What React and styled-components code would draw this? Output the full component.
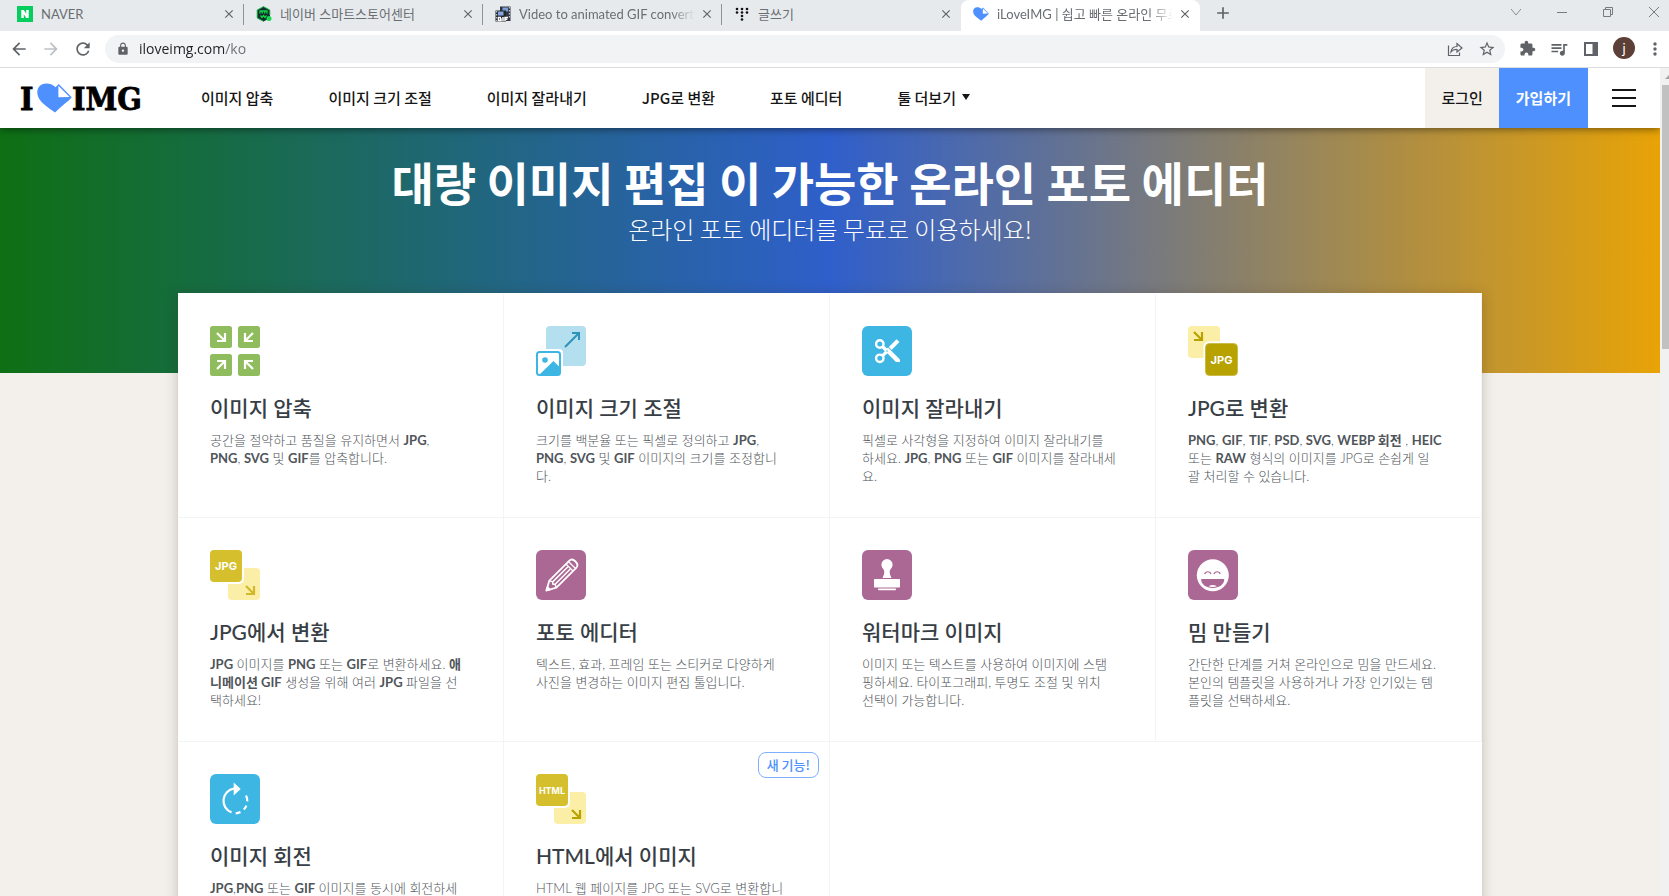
import React from "react";
import styled, { createGlobalStyle, css } from "styled-components";
import {
  MdArrowBack,
  MdArrowForward,
  MdRefresh,
  MdLock,
  MdExtension,
  MdQueueMusic,
  MdStarBorder,
  MdMoreVert,
  MdClose,
  MdAdd,
} from "react-icons/md";

const KR = `"Noto Sans CJK KR", sans-serif`;
const BODY = `Lato, "Noto Sans CJK KR", sans-serif`;

const GlobalStyle = createGlobalStyle`
  *, *::before, *::after { box-sizing: border-box; }
  body { margin: 0; font-family: ${KR}; background: #f3f0ec; }
  button, input { font: inherit; color: inherit; border: 0; padding: 0; background: none; }
  a { color: inherit; text-decoration: none; }
  h1, h2, h3, p, ul { margin: 0; padding: 0; }
  svg { display: block; }
`;

const Window = styled.div`
  height: 100vh;
  display: flex;
  flex-direction: column;
  overflow: hidden;
`;

/* ---------- browser chrome ---------- */

const TabStrip = styled.div`
  flex: none;
  display: flex;
  height: 31px;
  padding-left: 5px;
  background: #e7eaed;
`;

const Tab = styled.div`
  width: 239px;
  flex: 0 1 239px;
  min-width: 0;
  height: 31px;
  display: flex;
  align-items: center;
  gap: 4px;
  padding: 0 7px 4px 12px;
  color: #6a6e73;
  font-family: ${BODY};
  font-size: 13px;
  ${(p) =>
    p.$active
      ? css`
          background: #fff;
          border-radius: 8px 8px 0 0;
        `
      : p.$divided &&
        css`
          background: linear-gradient(#8f9398, #8f9398) right 0 top 4px / 1px 21px no-repeat;
        `}
`;

const TabLabel = styled.button`
  flex: 1;
  min-width: 0;
  display: flex;
  align-items: center;
  gap: 8px;
  line-height: 20px;
  text-align: left;
  svg { flex: none; }
`;

const TabTitle = styled.span`
  flex: 1;
  overflow: hidden;
  white-space: nowrap;
  ${(p) =>
    p.$fade &&
    css`
      mask-image: linear-gradient(90deg, #000 calc(100% - 24px), transparent);
    `}
`;

const IconButton = styled.button`
  flex: none;
  width: ${(p) => p.$size || 24}px;
  height: ${(p) => p.$size || 24}px;
  display: grid;
  place-items: center;
  color: ${(p) => p.$color || "#5f6368"};
`;

const NewTab = styled(IconButton)`
  margin: 1px 0 0 11px;
`;

const WindowControls = styled.div`
  margin-left: auto;
  height: 22px;
  display: flex;
  gap: 22px;
  padding-right: 3px;
`;

const Toolbar = styled.div`
  flex: none;
  display: flex;
  align-items: center;
  height: 37px;
  padding: 0 2px 1px 7px;
  background: #fff;
  border-bottom: 1px solid #dadce0;
`;

const HistoryButtons = styled.div`
  display: flex;
  gap: 8px;
`;

const AddressBar = styled.label`
  flex: 1;
  display: flex;
  align-items: center;
  height: 28px;
  margin: 0 10px;
  padding: 0 6px 0 11px;
  gap: 9px;
  border-radius: 14px;
  background: #f1f3f4;
  color: #5f6368;
`;

const AddressInput = styled.input`
  flex: 1;
  min-width: 0;
  height: 24px;
  font-family: "Open Sans", sans-serif;
  font-size: 14px;
  outline: 0;
  background: linear-gradient(90deg, #202124 86px, #6b6f73 86px);
  background-clip: text;
  -webkit-text-fill-color: transparent;
`;

const BarActions = styled.div`
  display: flex;
  gap: 8px;
`;

const Avatar = styled.button`
  width: 22px;
  height: 22px;
  margin-left: 2px;
  border-radius: 50%;
  background: #5c4037;
  color: #fff;
  font-size: 13px;
  line-height: 20px;
`;

/* ---------- page ---------- */

const Viewport = styled.div`
  flex: 1;
  min-height: 0;
  display: flex;
`;

const Page = styled.div`
  flex: 1;
  min-width: 0;
  overflow: hidden;
`;

const ScrollTrack = styled.div`
  flex: none;
  width: 9px;
  padding: 7px 0 0 2px;
  overflow: hidden;
  background: #f1f1f1;
`;

const ScrollThumb = styled.div`
  height: 264px;
  margin-top: 6px;
  background: #c1c1c1;
`;

const Header = styled.header`
  position: relative;
  display: flex;
  align-items: stretch;
  height: 60px;
  background: #fff;
  color: #161616;
  font-size: 15px;
  font-weight: 500;
  box-shadow: 0 1px 8px rgba(0, 0, 0, 0.5);
`;

const LogoLink = styled.a`
  display: flex;
  align-items: center;
  padding-left: 19px;
`;

const Nav = styled.nav`
  display: flex;
  align-items: center;
  gap: 55px;
  margin-left: 58px;
  padding-bottom: 2px;
  white-space: nowrap;
`;

const MoreButton = styled.button`
  display: flex;
  align-items: center;
  gap: 6px;
`;

const Account = styled.div`
  display: flex;
  margin-left: auto;
`;

const AccountLink = styled.a`
  display: flex;
  align-items: center;
  padding: 0 ${(p) => (p.$primary ? 17 : 16)}px 2px;
  background: ${(p) => (p.$primary ? "#4d90fe" : "#f3f0ec")};
  color: ${(p) => (p.$primary ? "#fff" : "inherit")};
  font-weight: ${(p) => (p.$primary ? 700 : 500)};
`;

const MenuButton = styled.button`
  width: 72px;
  display: grid;
  place-items: center;
`;

const Hero = styled.section`
  height: 245px;
  padding-top: 25px;
  background: linear-gradient(90deg, #0e7014, #2f5fcb 50%, #e8a306);
  color: #fff;
  text-align: center;
`;

const HeroTitle = styled.h1`
  font-size: 46px;
  line-height: 56px;
  font-weight: 700;
`;

const HeroText = styled.h2`
  font-size: 24px;
  line-height: 40px;
  font-weight: 300;
`;

const Tools = styled.main`
  width: 1304px;
  max-width: calc(100% - 32px);
  margin: -80px auto 0;
  padding-top: 1px;
  display: grid;
  grid-template-columns: repeat(4, minmax(0, 1fr));
  grid-auto-rows: minmax(224px, auto);
  background: #fff;
  box-shadow: 0 2px 12px rgba(60, 40, 20, 0.25);
`;

const ToolCard = styled.a`
  position: relative;
  display: flex;
  flex-direction: column;
  padding: 32px;
  border: solid #f3f4f5;
  border-width: 0 1px 1px 0;
  svg { flex: none; }
`;

const ToolTitle = styled.h3`
  margin-top: 16px;
  color: #383e45;
  font-family: ${BODY};
  font-size: 21px;
  line-height: 32px;
  font-weight: 500;
`;

const ToolText = styled.p`
  margin-top: 7px;
  color: #50555a;
  font-family: ${BODY};
  font-size: 13px;
  line-height: 18px;
  font-weight: 300;
  white-space: nowrap;
  b { font-weight: 700; }
`;

const Badge = styled.span`
  position: absolute;
  top: 10px;
  right: 10px;
  padding: 0 8px;
  border: 1px solid #7fb0ff;
  border-radius: 8px;
  color: #4d90fe;
  font-size: 13px;
  line-height: 24px;
  font-weight: 500;
`;

/* ---------- drawings ---------- */

const HeartShape = () => (
  <>
    <path
      d="M18 29.600C11 24 .9 19 .3 10 0 4.200 4 .5 9 .5c4.200 0 7.500 1.500 9.600 3.800L21.700 1 34.700 14.200C31 19 24.500 22.500 18 29.600z"
      fill="#4d90fe"
    />
    <path d="M21.400 2.800V14.200L32.600 14z" fill="#fff" />
  </>
);

const Logo = () => (
  <svg width="124" height="48" viewBox="0 0 124 48" role="img" aria-label="I love IMG">
    <g
      fontFamily="'DejaVu Serif Condensed', 'DejaVu Serif', serif"
      fontWeight="700"
      fontSize="32"
      stroke="#000"
      strokeWidth="0.8"
    >
      <text x="1" y="36">I</text>
      <text x="53" y="36">IMG</text>
    </g>
    <g transform="translate(18 9)"><HeartShape /></g>
  </svg>
);

const NaverIcon = () => (
  <svg width="16" height="16" viewBox="0 0 16 16">
    <rect width="16" height="16" fill="#05ce5f" />
    <path d="M4.300 4h2.500l2.400 3.700V4h2.500v8H9.200L6.800 8.300V12H4.300z" fill="#fff" />
  </svg>
);
const StoreIcon = () => (
  <svg width="16" height="16" viewBox="0 0 16 16">
    <path d="M7.500.5 14 4v8l-6.500 3.500L1 12V4z" fill="#102f2c" />
    <path d="M3.500 5h8M4 5v2.500M6.200 5v2.500M8.700 5v2.500M11 5v2.500M4.500 9.500l1.500 2 1.500-2 1.500 2 1.500-2" stroke="#14d34c" strokeWidth="1.300" fill="none" />
    <circle cx="13" cy="12.500" r="2.500" fill="#16d94d" />
    <path d="M7.500.7 13.800 4v5M7.500 15.300 1.200 12V4L7.500.7" stroke="#1fbd50" fill="none" />
  </svg>
);
const FilmIcon = () => (
  <svg width="16" height="16" viewBox="0 0 16 16">
    <path d="M5 .5h10.500V15H5z" fill="#303540" />
    <path d="M7.500 1.500h5.500v4H7.500z" fill="#7e9ed6" />
    <path d="M.5 4.500H11V15.500H.5z" fill="#22262e" />
    <path d="M3 5.500h5.500v4H3z" fill="#88a8df" />
    <path d="M1.700 5v10M14.300 1v11" stroke="#e5e9f0" strokeDasharray="1.500 1.500" />
    <path d="M6 11.500H3.500v3H6V13H5M8 11v4M10 15v-3.500h3M10 13.200h2.300" stroke="#fff" strokeWidth="1.500" fill="none" />
  </svg>
);
const DotsIcon = () => (
  <svg width="16" height="16" viewBox="0 0 16 16">
    {[[3, 3], [8, 3], [13, 3], [3, 6.500], [8, 6.500], [13, 6.500], [8, 10], [8, 13.500]].map(([x, y]) => (
      <circle key={`${x}-${y}`} cx={x} cy={y} r="1.300" fill="#111" />
    ))}
  </svg>
);
const HeartIcon = () => (
  <svg width="16" height="16" viewBox="0 -2 35 34"><HeartShape /></svg>
);

const LineIcon = ({ d, size = 16, width = 1, color = "currentColor" }) => (
  <svg width={size} height={size} viewBox={`0 0 ${size} ${size}`} fill="none" stroke={color} strokeWidth={width}>
    <path d={d} />
  </svg>
);

const SMALL_ARROW = "M-4 -4 4 4M4 -4V4H-4";

const Arrow = ({ x, y, turn = 0, color = "#fff" }) => (
  <path
    d={SMALL_ARROW}
    transform={`translate(${x} ${y}) rotate(${turn})`}
    stroke={color}
    strokeWidth="2.200"
    fill="none"
  />
);

const ToolSvg = ({ children }) => (
  <svg width="50" height="50" viewBox="0 0 50 50" aria-hidden="true">{children}</svg>
);

const CompressIcon = () => (
  <ToolSvg>
    {[[0, 0, 0], [28, 0, 90], [28, 28, 180], [0, 28, 270]].map(([x, y, turn]) => (
      <g key={turn}>
        <rect x={x} y={y} width="22" height="22" rx="2.500" fill="#8fbc5d" />
        <Arrow x={x + 11} y={y + 11} turn={turn} />
      </g>
    ))}
  </ToolSvg>
);

const ResizeIcon = () => (
  <ToolSvg>
    <rect x="10" width="40" height="40" rx="4" fill="#b4dfee" />
    <path d="M29 21 43 7M36 7h7v7" stroke="#2f93b9" strokeWidth="2" fill="none" />
    <rect x="-2" y="23" width="29" height="29" rx="4" fill="#fff" />
    <rect x="1" y="26" width="23" height="23" rx="2.500" fill="#fff" stroke="#3db6e3" strokeWidth="2" />
    <circle cx="9" cy="34" r="2.800" fill="#3db6e3" />
    <path d="M3 49 17.500 35 24 41.500V48l-1 1z" fill="#3db6e3" />
  </ToolSvg>
);

const CropIcon = () => (
  <ToolSvg>
    <rect width="50" height="50" rx="6" fill="#3db6e3" />
    <g stroke="#fff" fill="none">
      <circle cx="17.800" cy="18" r="3.700" strokeWidth="2.400" />
      <circle cx="17.800" cy="32.300" r="3.700" strokeWidth="2.400" />
      <path d="M20.500 20.500 26 26M20.500 29.700 25 25.500" strokeWidth="3.200" />
      <path d="M28.200 22.500 36 14.700" strokeWidth="4" />
    </g>
    <path d="M22.500 24.500 26 21.500 38 33.500V36h-4z" fill="#fff" />
    <circle cx="25" cy="25" r=".8" fill="#3db6e3" />
  </ToolSvg>
);

const BoxText = ({ x, y, size, children }) => (
  <text x={x} y={y} fontFamily="Inter, sans-serif" fontWeight="700" fontSize={size} fill="#fff" textAnchor="middle">
    {children}
  </text>
);

const ToJpgIcon = () => (
  <ToolSvg>
    <rect width="32" height="32" rx="4" fill="#fbeea6" />
    <Arrow x={10} y={10} color="#b8a200" />
    <rect x="15.500" y="15.500" width="36" height="36" rx="5" fill="#fff" />
    <rect x="17.500" y="17.500" width="32" height="32" rx="4" fill="#b8a200" stroke="#cbbb48" />
    <BoxText x="33.500" y="38" size="11">JPG</BoxText>
  </ToolSvg>
);

const FromIcon = ({ label, size, arrow }) => (
  <ToolSvg>
    <rect x="18" y="18" width="32" height="32" rx="4" fill="#fbeea6" />
    <Arrow x={40} y={40} color={arrow} />
    <rect x="-2" y="-2" width="36" height="36" rx="5" fill="#fff" />
    <rect width="32" height="32" rx="4" fill="#d5bf2d" />
    <BoxText x="16" y="20" size={size}>{label}</BoxText>
  </ToolSvg>
);

const EditorIcon = () => (
  <ToolSvg>
    <rect width="50" height="50" rx="6" fill="#ac6894" />
    <g transform="translate(10.500 40.500) rotate(-45)" stroke="#fff" fill="none" strokeWidth="1.800" strokeLinejoin="round">
      <path d="M0 0 9-5H37q4 0 4 5t-4 5H9z" />
      <path d="M9-5 10.500-1.700 9 0l1.500 1.700L9 5M10.500-1.700H32M10.500 1.700H32" strokeWidth="1.500" />
      <path d="M32.500-5V5M36-5V5" strokeWidth="1.300" />
      <path d="M0 0 3-1.700v3.400z" fill="#fff" />
    </g>
  </ToolSvg>
);

const StampIcon = () => (
  <ToolSvg>
    <rect width="50" height="50" rx="6" fill="#ac6894" />
    <g fill="#fff">
      <path d="M25 9a5.600 5.600 0 0 1 5.600 5.600c0 4-3.400 4.500-2.800 8.400.2 2 1 3.300 1.700 5H20.500c.7-1.700 1.500-3 1.700-5 .6-3.900-2.800-4.400-2.800-8.400A5.600 5.600 0 0 1 25 9z" />
      <rect x="12" y="29" width="26" height="8.500" rx=".7" />
      <rect x="16" y="38.500" width="18" height="1.700" rx=".8" />
    </g>
  </ToolSvg>
);

const MemeIcon = () => (
  <ToolSvg>
    <rect width="50" height="50" rx="6" fill="#ac6894" />
    <circle cx="24.800" cy="25.300" r="16" fill="#fff" />
    <path d="M16.700 24c.8-3 5.400-3 6.200 0M26 24c.8-3 5.400-3 6.200 0" stroke="#ac6894" strokeWidth="1.200" fill="none" />
    <path d="M13.200 29h23c.5 5-5 9-11.500 9s-12-4-11.500-9z" fill="#ac6894" />
    <path d="M20.500 36.300q4.200-2.600 8.400 0-4.200 1.500-8.400 0z" fill="#fff" />
  </ToolSvg>
);

const RotateIcon = () => (
  <ToolSvg>
    <rect width="50" height="50" rx="6" fill="#3db6e3" />
    <path
      d="M24 14.700A12.300 12.300 0 0 0 21.500 38.400M25.700 39.300A12.300 12.300 0 0 0 30.500 38M33.800 35.500A12.300 12.300 0 0 0 36.400 31.600M37.300 27.400A12.300 12.300 0 0 0 36 21.500"
      stroke="#fff"
      strokeWidth="2.200"
      fill="none"
    />
    <path d="M23.700 8.500 30.700 15l-7 6.500z" fill="#fff" />
  </ToolSvg>
);

/* ---------- content ---------- */

const tabs = [
  { title: "NAVER", icon: <NaverIcon />, divided: true },
  { title: "네이버 스마트스토어센터", icon: <StoreIcon />, divided: true },
  { title: "Video to animated GIF converte", icon: <FilmIcon />, divided: true, fade: true },
  { title: "글쓰기", icon: <DotsIcon /> },
  { title: "iLoveIMG | 쉽고 빠른 온라인 무료", icon: <HeartIcon />, active: true, fade: true },
];

const navItems = ["이미지 압축", "이미지 크기 조절", "이미지 잘라내기", "JPG로 변환", "포토 에디터"];

const tools = [
  {
    title: "이미지 압축",
    icon: <CompressIcon />,
    text: <>공간을 절약하고 품질을 유지하면서 <b>JPG</b>,<br /><b>PNG</b>, <b>SVG</b> 및 <b>GIF</b>를 압축합니다.</>,
  },
  {
    title: "이미지 크기 조절",
    icon: <ResizeIcon />,
    text: <>크기를 백분율 또는 픽셀로 정의하고 <b>JPG</b>,<br /><b>PNG</b>, <b>SVG</b> 및 <b>GIF</b> 이미지의 크기를 조정합니<br />다.</>,
  },
  {
    title: "이미지 잘라내기",
    icon: <CropIcon />,
    text: <>픽셀로 사각형을 지정하여 이미지 잘라내기를<br />하세요. <b>JPG</b>, <b>PNG</b> 또는 <b>GIF</b> 이미지를 잘라내세<br />요.</>,
  },
  {
    title: "JPG로 변환",
    icon: <ToJpgIcon />,
    text: <><b>PNG</b>, <b>GIF</b>, <b>TIF</b>, <b>PSD</b>, <b>SVG</b>, <b>WEBP 회전</b> , <b>HEIC</b><br />또는 <b>RAW</b> 형식의 이미지를 JPG로 손쉽게 일<br />괄 처리할 수 있습니다.</>,
  },
  {
    title: "JPG에서 변환",
    icon: <FromIcon label="JPG" size="11" arrow="#d0b92a" />,
    text: <><b>JPG</b> 이미지를 <b>PNG</b> 또는 <b>GIF</b>로 변환하세요. <b>애<br />니메이션 GIF</b> 생성을 위해 여러 <b>JPG</b> 파일을 선<br />택하세요!</>,
  },
  {
    title: "포토 에디터",
    icon: <EditorIcon />,
    text: <>텍스트, 효과, 프레임 또는 스티커로 다양하게<br />사진을 변경하는 이미지 편집 툴입니다.</>,
  },
  {
    title: "워터마크 이미지",
    icon: <StampIcon />,
    text: <>이미지 또는 텍스트를 사용하여 이미지에 스탬<br />핑하세요. 타이포그래피, 투명도 조절 및 위치<br />선택이 가능합니다.</>,
  },
  {
    title: "밈 만들기",
    icon: <MemeIcon />,
    text: <>간단한 단계를 거쳐 온라인으로 밈을 만드세요.<br />본인의 템플릿을 사용하거나 가장 인기있는 템<br />플릿을 선택하세요.</>,
  },
  {
    title: "이미지 회전",
    icon: <RotateIcon />,
    text: <><b>JPG</b>,<b>PNG</b> 또는 <b>GIF</b> 이미지를 동시에 회전하세</>,
  },
  {
    title: "HTML에서 이미지",
    icon: <FromIcon label="HTML" size="9" arrow="#b8a200" />,
    text: <>HTML 웹 페이지를 JPG 또는 SVG로 변환합니</>,
    badge: "새 기능!",
  },
];

export default function App() {
  return (
    <Window>
      <GlobalStyle />
      <TabStrip>
        {tabs.map((t) => (
          <Tab key={t.title} $active={t.active} $divided={t.divided}>
            <TabLabel>
              {t.icon}
              <TabTitle $fade={t.fade}>{t.title}</TabTitle>
            </TabLabel>
            <IconButton $size={16} aria-label="닫기"><MdClose size={14} /></IconButton>
          </Tab>
        ))}
        <NewTab aria-label="새 탭"><MdAdd size={20} /></NewTab>
        <WindowControls>
          <IconButton $color="#8a8d91" aria-label="탭 검색"><LineIcon d="M3 5 8 11 13 5" /></IconButton>
          <IconButton $color="#777b80" aria-label="최소화"><LineIcon d="M3 8.500H13" /></IconButton>
          <IconButton $color="#777b80" aria-label="이전 크기로"><LineIcon d="M3.500 5.500h7v7h-7zM5.500 5.500V3.500h7v7h-2" /></IconButton>
          <IconButton $color="#777b80" aria-label="창 닫기"><LineIcon d="M3 3 13 13M13 3 3 13" /></IconButton>
        </WindowControls>
      </TabStrip>

      <Toolbar>
        <HistoryButtons>
          <IconButton aria-label="뒤로"><MdArrowBack size={20} /></IconButton>
          <IconButton $color="#bdc1c6" aria-label="앞으로"><MdArrowForward size={20} /></IconButton>
          <IconButton aria-label="새로고침"><MdRefresh size={20} /></IconButton>
        </HistoryButtons>
        <AddressBar>
          <MdLock size={14} />
          <AddressInput aria-label="주소" defaultValue="iloveimg.com/ko" />
          <BarActions>
            <IconButton aria-label="공유">
              <LineIcon d="M1.500 4.500v10h11V11.500M4 11C4.500 7 7 5.500 10 5.500V2.500L15 7l-5 4V8.500C7.500 8.300 5.500 9 4 11z" width={1.2} />
            </IconButton>
            <IconButton aria-label="북마크"><MdStarBorder size={18} /></IconButton>
          </BarActions>
        </AddressBar>
        <BarActions>
          <IconButton aria-label="확장 프로그램"><MdExtension size={17} /></IconButton>
          <IconButton aria-label="미디어"><MdQueueMusic size={20} /></IconButton>
          <IconButton aria-label="사이드 패널">
            <svg width="16" height="16" viewBox="0 0 16 16" fill="currentColor">
              <path d="M1 1h14v14H1zM3 3v10h6.500V3z" fillRule="evenodd" />
            </svg>
          </IconButton>
          <Avatar aria-label="프로필">j</Avatar>
          <IconButton aria-label="메뉴"><MdMoreVert size={20} /></IconButton>
        </BarActions>
      </Toolbar>

      <Viewport>
        <Page>
          <Header>
            <LogoLink href="#"><Logo /></LogoLink>
            <Nav>
              {navItems.map((item) => <a key={item} href="#">{item}</a>)}
              <MoreButton>
                툴 더보기
                <svg width="8" height="6" viewBox="0 0 8 6"><path d="M0 0h8L4 6z" fill="#161616" /></svg>
              </MoreButton>
            </Nav>
            <Account>
              <AccountLink href="#">로그인</AccountLink>
              <AccountLink href="#" $primary>가입하기</AccountLink>
              <MenuButton aria-label="전체 메뉴">
                <LineIcon size={24} width={2} d="M0 4H24M0 12H24M0 20H24" />
              </MenuButton>
            </Account>
          </Header>
          <Hero>
            <HeroTitle>대량 이미지 편집 이 가능한 온라인 포토 에디터</HeroTitle>
            <HeroText>온라인 포토 에디터를 무료로 이용하세요!</HeroText>
          </Hero>
          <Tools>
            {tools.map((tool) => (
              <ToolCard key={tool.title} href="#">
                {tool.icon}
                <ToolTitle>{tool.title}</ToolTitle>
                <ToolText>{tool.text}</ToolText>
                {tool.badge && <Badge>{tool.badge}</Badge>}
              </ToolCard>
            ))}
          </Tools>
        </Page>
        <ScrollTrack aria-hidden="true">
          <svg width="10" height="4" viewBox="0 0 10 4"><path d="M3 4h7V0H7z" fill="#a3a3a3" /></svg>
          <ScrollThumb />
        </ScrollTrack>
      </Viewport>
    </Window>
  );
}
